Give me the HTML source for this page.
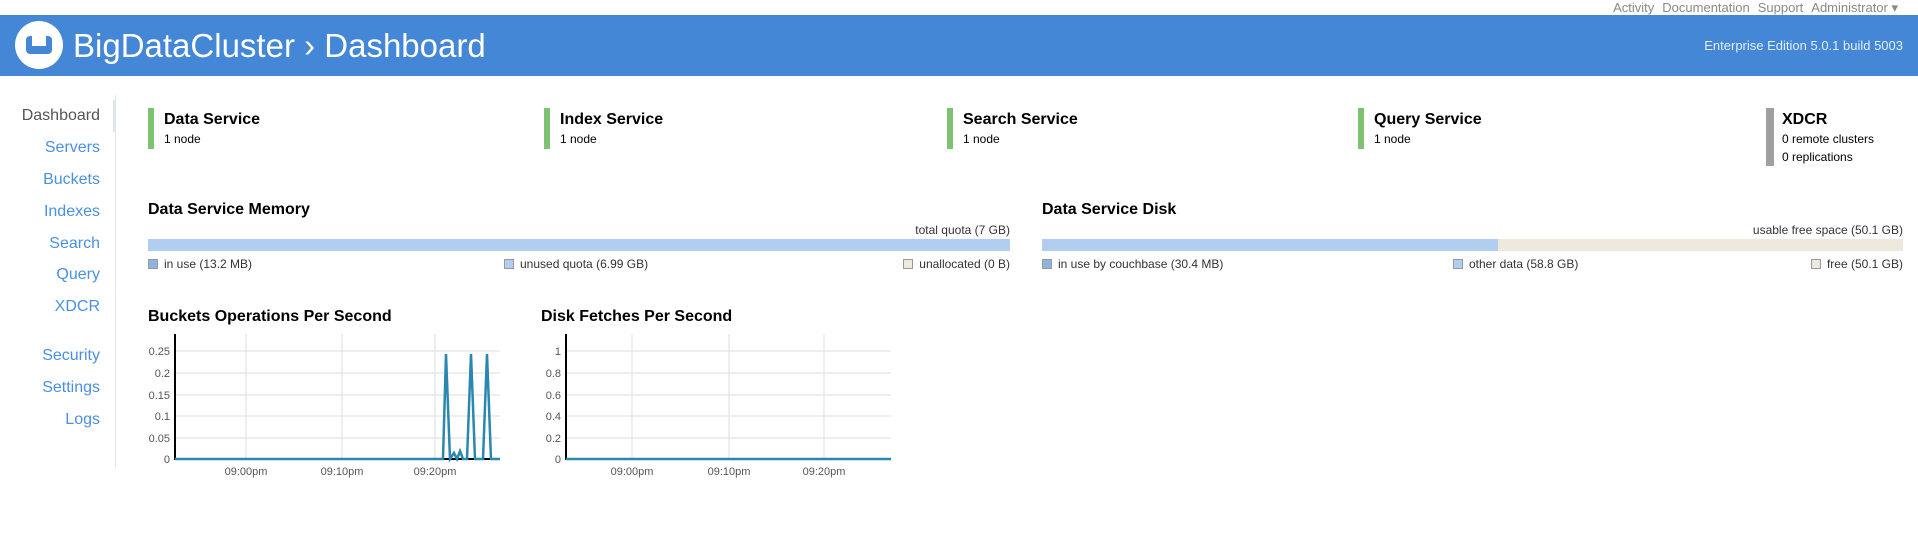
<!DOCTYPE html>
<html><head><meta charset="utf-8"><style>
*{margin:0;padding:0;box-sizing:border-box}
body{width:1918px;height:556px;background:#fff;font-family:"Liberation Sans",sans-serif;position:relative;overflow:hidden;color:#000}
.a{position:absolute;white-space:nowrap}
.top{top:0;right:20px;font-size:13px;color:#888;line-height:15px}
.top span{margin-left:8px}
.hdr{left:0;top:15px;width:1918px;height:61px;background:#4387d6}
.nav{right:1818px;font-size:16px;color:#4a90e2;text-align:right}
.bar{width:6px;background:#7dc373}
.st{font-size:16px;font-weight:bold}
.sn{font-size:12px}
.h{font-size:16px;font-weight:bold}
.sm{font-size:12px;color:#333}
.sq{display:inline-block;width:10px;height:10px;border:1px solid #999;margin-right:6px;vertical-align:-1px}
</style></head><body>
<div class="a top">Activity<span>Documentation</span><span>Support</span><span>Administrator ▾</span></div>
<div class="a hdr"></div>
<svg class="a" style="left:15px;top:21px" width="48" height="48"><circle cx="24" cy="24" r="24" fill="#fff"/><rect x="11" y="15" width="26" height="18" rx="4" fill="#4387d6"/><rect x="17" y="15" width="14" height="10" fill="#fff"/></svg>
<div class="a" style="left:73px;top:27px;font-size:33px;color:#fff;line-height:38px">BigDataCluster › Dashboard</div>
<div class="a" style="right:15px;top:38px;font-size:13px;color:#e4eefa">Enterprise Edition 5.0.1 build 5003</div>

<div class="a" style="left:115px;top:95px;width:1px;height:372px;background:#e6e6e6"></div>
<div class="a" style="left:113px;top:100px;width:2px;height:32px;background:#dde6f0"></div>
<div class="a nav" style="top:107px;color:#555">Dashboard</div>
<div class="a nav" style="top:139px">Servers</div>
<div class="a nav" style="top:171px">Buckets</div>
<div class="a nav" style="top:203px">Indexes</div>
<div class="a nav" style="top:235px">Search</div>
<div class="a nav" style="top:266px">Query</div>
<div class="a nav" style="top:298px">XDCR</div>
<div class="a nav" style="top:347px">Security</div>
<div class="a nav" style="top:379px">Settings</div>
<div class="a nav" style="top:411px">Logs</div>

<div class="a bar" style="left:148px;top:108px;height:41px"></div>
<div class="a st" style="left:164px;top:111px">Data Service</div><div class="a sn" style="left:164px;top:132px">1 node</div>
<div class="a bar" style="left:544px;top:108px;height:41px"></div>
<div class="a st" style="left:560px;top:111px">Index Service</div><div class="a sn" style="left:560px;top:132px">1 node</div>
<div class="a bar" style="left:947px;top:108px;height:41px"></div>
<div class="a st" style="left:963px;top:111px">Search Service</div><div class="a sn" style="left:963px;top:132px">1 node</div>
<div class="a bar" style="left:1358px;top:108px;height:41px"></div>
<div class="a st" style="left:1374px;top:111px">Query Service</div><div class="a sn" style="left:1374px;top:132px">1 node</div>
<div class="a bar" style="left:1766px;top:108px;height:58px;width:8px;background:#a0a0a0"></div>
<div class="a st" style="left:1782px;top:111px">XDCR</div><div class="a sn" style="left:1782px;top:132px">0 remote clusters</div><div class="a sn" style="left:1782px;top:150px">0 replications</div>

<div class="a h" style="left:148px;top:201px">Data Service Memory</div>
<div class="a sm" style="right:908px;top:223px">total quota (7 GB)</div>
<div class="a" style="left:148px;top:239px;width:862px;height:12px;background:#b1cdef"></div>
<div class="a sm" style="left:148px;top:257px"><span class="sq" style="background:#8fb3e0"></span>in use (13.2 MB)</div>
<div class="a sm" style="left:504px;top:257px"><span class="sq" style="background:#b1cdef"></span>unused quota (6.99 GB)</div>
<div class="a sm" style="right:908px;top:257px"><span class="sq" style="background:#efe9dd"></span>unallocated (0 B)</div>

<div class="a h" style="left:1042px;top:201px">Data Service Disk</div>
<div class="a sm" style="right:15px;top:223px">usable free space (50.1 GB)</div>
<div class="a" style="left:1042px;top:239px;width:861px;height:12px;background:#efe9dd"></div>
<div class="a" style="left:1042px;top:239px;width:456px;height:12px;background:#b1cdef"></div>
<div class="a sm" style="left:1042px;top:257px"><span class="sq" style="background:#8fb3e0"></span>in use by couchbase (30.4 MB)</div>
<div class="a sm" style="left:1453px;top:257px"><span class="sq" style="background:#b1cdef"></span>other data (58.8 GB)</div>
<div class="a sm" style="right:15px;top:257px"><span class="sq" style="background:#efe9dd"></span>free (50.1 GB)</div>

<div class="a h" style="left:148px;top:308px">Buckets Operations Per Second</div>
<svg class="a" style="left:140px;top:330px" width="370" height="150" font-family="Liberation Sans" font-size="11" fill="#555">
<g stroke="#ddd" stroke-width="1"><line x1="35" y1="21" x2="360" y2="21"/><line x1="35" y1="43" x2="360" y2="43"/><line x1="35" y1="65" x2="360" y2="65"/><line x1="35" y1="86" x2="360" y2="86"/><line x1="35" y1="108" x2="360" y2="108"/><line x1="106" y1="4" x2="106" y2="129"/><line x1="202" y1="4" x2="202" y2="129"/><line x1="295" y1="4" x2="295" y2="129"/></g>
<line x1="35" y1="4" x2="35" y2="130" stroke="#000" stroke-width="2"/>
<line x1="35" y1="129" x2="360" y2="129" stroke="#000" stroke-width="2"/>
<polyline fill="none" stroke="#2a88b0" stroke-width="2.5" points="35,129 303,129 306,24 310,129 314,123 317,129 320,121 323,129 327,129 331,24 335,129 343,129 347,24 351,129 360,129"/>
<g text-anchor="end"><text x="30" y="25">0.25</text><text x="30" y="47">0.2</text><text x="30" y="69">0.15</text><text x="30" y="90">0.1</text><text x="30" y="112">0.05</text><text x="30" y="133">0</text></g>
<g text-anchor="middle"><text x="106" y="145">09:00pm</text><text x="202" y="145">09:10pm</text><text x="295" y="145">09:20pm</text></g>
</svg>

<div class="a h" style="left:541px;top:308px">Disk Fetches Per Second</div>
<svg class="a" style="left:531px;top:330px" width="370" height="150" font-family="Liberation Sans" font-size="11" fill="#555">
<g stroke="#ddd" stroke-width="1"><line x1="35" y1="21" x2="360" y2="21"/><line x1="35" y1="43" x2="360" y2="43"/><line x1="35" y1="65" x2="360" y2="65"/><line x1="35" y1="86" x2="360" y2="86"/><line x1="35" y1="108" x2="360" y2="108"/><line x1="101" y1="4" x2="101" y2="129"/><line x1="198" y1="4" x2="198" y2="129"/><line x1="293" y1="4" x2="293" y2="129"/></g>
<line x1="35" y1="4" x2="35" y2="130" stroke="#000" stroke-width="2"/>
<line x1="35" y1="129" x2="360" y2="129" stroke="#2a88b0" stroke-width="2.5"/>
<g text-anchor="end"><text x="30" y="25">1</text><text x="30" y="47">0.8</text><text x="30" y="69">0.6</text><text x="30" y="90">0.4</text><text x="30" y="112">0.2</text><text x="30" y="133">0</text></g>
<g text-anchor="middle"><text x="101" y="145">09:00pm</text><text x="198" y="145">09:10pm</text><text x="293" y="145">09:20pm</text></g>
</svg>
</body></html>
